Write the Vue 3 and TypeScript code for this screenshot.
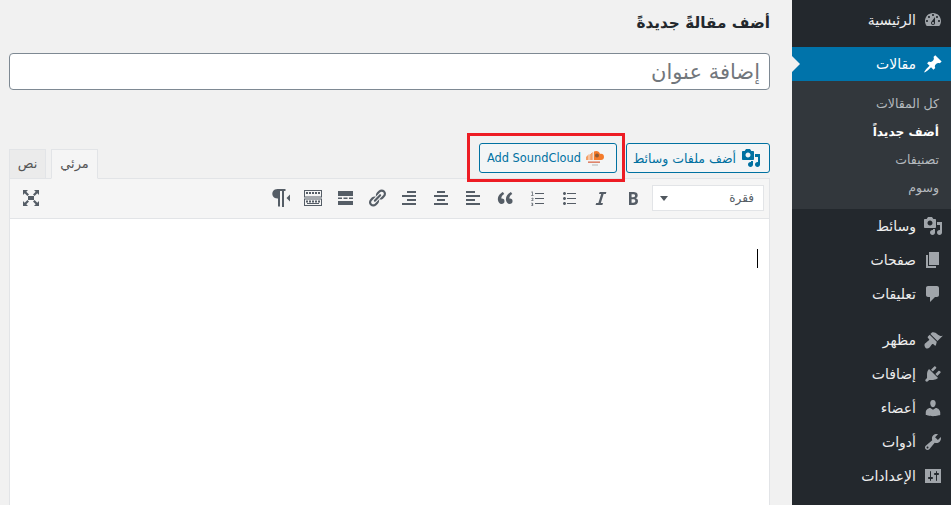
<script setup lang="ts">
const P = {
  home: 'M3.76 16h12.48c1.1-1.37 1.76-3.11 1.76-5 0-4.42-3.58-8-8-8s-8 3.58-8 8c0 1.89.66 3.63 1.76 5zM10 4c.55 0 1 .45 1 1s-.45 1-1 1-1-.45-1-1 .45-1 1-1zM6 6c.55 0 1 .45 1 1s-.45 1-1 1-1-.45-1-1 .45-1 1-1zm8 0c.55 0 1 .45 1 1s-.45 1-1 1-1-.45-1-1 .45-1 1-1zm-5.37 5.55L12 7v6c0 1.1-.9 2-2 2s-2-.9-2-2c0-.57.24-1.08.63-1.45zM4 10c.55 0 1 .45 1 1s-.45 1-1 1-1-.45-1-1 .45-1 1-1zm12 0c.55 0 1 .45 1 1s-.45 1-1 1-1-.45-1-1 .45-1 1-1zm-5 3c0-.55-.45-1-1-1s-1 .45-1 1 .45 1 1 1 1-.45 1-1z',
  pin: 'M10.44 3.02l1.82-1.82 6.36 6.35-1.83 1.82c-1.05-.68-2.48-.57-3.41.36l-.75.75c-.92.93-1.04 2.35-.35 3.41l-1.83 1.82-2.41-2.41-2.8 2.79c-.42.42-3.38 2.71-3.8 2.29s1.86-3.39 2.28-3.81l2.79-2.79L4.1 9.36l1.83-1.82c1.05.69 2.48.57 3.4-.36l.75-.75c.93-.92 1.05-2.35.36-3.41z',
  media: 'M13 11V4c0-.55-.45-1-1-1h-1.67L9 1H5L3.67 3H2c-.55 0-1 .45-1 1v7c0 .55.45 1 1 1h10c.55 0 1-.45 1-1zM7 4.5c1.38 0 2.5 1.12 2.5 2.5S8.38 9.5 7 9.5 4.5 8.38 4.5 7 5.62 4.5 7 4.5zM14 6h5v10.5c0 1.38-1.12 2.5-2.5 2.5S14 17.88 14 16.5s1.12-2.5 2.5-2.5c.17 0 .34.02.5.05V9h-3V6zm-4 8.05V13h2v3.5c0 1.38-1.12 2.5-2.5 2.5S7 17.88 7 16.5 8.12 14 9.5 14c.17 0 .34.02.5.05z',
  page: 'M6 15V2h10v13H6zm-1 1h8v2H3V5h2v11z',
  comment: 'M5 2h9c1.1 0 2 .9 2 2v7c0 1.1-.9 2-2 2h-2l-5 5v-5H5c-1.1 0-2-.9-2-2V4c0-1.1.9-2 2-2z',
  brush: 'M14.48 11.06L7.41 3.99l1.5-1.5c.5-.56 2.3-.47 3.51.32 1.21.8 1.43 1.28 2.91 2.1 1.18.64 2.45 1.26 4.45.85zm-.71.71L6.7 4.7 4.93 6.47c-.39.39-.39 1.02 0 1.41l1.06 1.06c.39.39.39 1.03 0 1.42-.6.6-1.43 1.11-2.21 1.69-.35.26-.7.53-1.01.84C1.43 13.23 1 15 2 17s3 2 4.5 .5c.31-.31.58-.66.84-1.01.58-.78 1.09-1.61 1.69-2.21.39-.39 1.02-.39 1.41 0l1.06 1.06c.39.39 1.03.39 1.42 0z',
  plug: 'M13.11 4.36L9.87 7.6 8 5.73l3.24-3.24c.35-.34 1.05-.2 1.56.32.52.51.66 1.21.31 1.55zm-8 1.77l.91-1.12 9.01 9.01-1.19.84c-.71.71-2.63 1.16-3.82 1.16H6.14L4.9 17.26c-.59.59-1.54.59-2.12 0-.59-.58-.59-1.53 0-2.12l1.24-1.24v-3.88c0-1.13.4-3.19 1.09-3.89zm7.26 3.97l3.24-3.24c.34-.35 1.04-.21 1.55.31.52.51.66 1.21.31 1.55l-3.24 3.25z',
  user: 'M10 9.25c-2.27 0-2.73-3.44-2.73-3.44C7 4.02 7.82 2 9.97 2c2.16 0 2.98 2.02 2.71 3.81 0 0-.41 3.44-2.68 3.44zm0 2.57L12.72 10c2.39 0 4.52 2.33 4.52 4.53v2.49s-3.65 1.13-7.24 1.13c-3.65 0-7.24-1.13-7.24-1.13v-2.49c0-2.25 1.94-4.48 4.47-4.48z',
  wrench: 'M16.68 9.77c-1.34 1.34-3.3 1.67-4.95.99l-5.41 6.52c-.99.99-2.59.99-3.58 0s-.99-2.59 0-3.57l6.52-5.42c-.68-1.65-.35-3.61.99-4.95 1.28-1.28 3.12-1.62 4.72-1.06l-2.89 2.89 2.82 2.82 2.86-2.87c.53 1.58.18 3.39-1.08 4.65zM3.81 16.21c.4.39 1.04.39 1.43 0 .4-.4.4-1.04 0-1.43-.39-.4-1.03-.4-1.43 0-.39.39-.39 1.03 0 1.43z',
  settings: 'M18 17V3H2v14zM8 11h1c.55 0 1 .45 1 1s-.45 1-1 1H8v1.5c0 .28-.22.5-.5.5s-.5-.22-.5-.5V13H6c-.55 0-1-.45-1-1s.45-1 1-1h1V5.5c0-.28.22-.5.5-.5s.5.22.5.5V11zm5-2h-1c-.55 0-1-.45-1-1s.45-1 1-1h1V5.5c0-.28.22-.5.5-.5s.5.22.5.5V7h1c.55 0 1 .45 1 1s-.45 1-1 1h-1v5.5c0 .28-.22.5-.5.5s-.5-.22-.5-.5V9z',
}
const topMenu = [{ label: 'وسائط', d: P.media }, { label: 'صفحات', d: P.page }, { label: 'تعليقات', d: P.comment }]
const lowMenu = [
  { label: 'مظهر', d: P.brush }, { label: 'إضافات', d: P.plug }, { label: 'أعضاء', d: P.user },
  { label: 'أدوات', d: P.wrench }, { label: 'الإعدادات', d: P.settings },
]
const sub = [
  { label: 'كل المقالات', cur: false }, { label: 'أضف جديداً', cur: true },
  { label: 'تصنيفات', cur: false }, { label: 'وسوم', cur: false },
]
const tools = [
  { name: 'bold', d: 'M6 4v13h4.54c1.37 0 2.46-.33 3.26-1 .8-.66 1.2-1.58 1.2-2.77 0-.84-.17-1.51-.51-2.01s-.9-.85-1.67-1.03v-.09c.57-.1 1.02-.4 1.36-.9.34-.49.51-1.13.51-1.91 0-1.14-.39-1.98-1.17-2.5C12.75 4.26 11.5 4 9.78 4H6zm2.57 5.15V6.26h1.36c.73 0 1.27.11 1.61.32.34.22.51.58.51 1.07 0 .54-.16.92-.47 1.15s-.82.35-1.51.35h-1.5zm0 2.19h1.6c1.44 0 2.16.53 2.16 1.61 0 .6-.17 1.05-.51 1.34-.34.29-.86.43-1.57.43H8.57v-3.38z' },
  { name: 'italic', d: 'M14.78 6h-2.13l-2.8 9h2.12l-.62 2H4.6l.62-2h2.14l2.8-9H8.03l.62-2h6.75z' },
  { name: 'ul', d: 'M5.5 7C4.67 7 4 6.33 4 5.5 4 4.68 4.67 4 5.5 4 6.32 4 7 4.68 7 5.5 7 6.33 6.32 7 5.5 7zM8 5h9v1H8V5zm-2.5 7c-.83 0-1.5-.67-1.5-1.5C4 9.68 4.67 9 5.5 9c.82 0 1.5.68 1.5 1.5 0 .83-.68 1.5-1.5 1.5zM8 10h9v1H8v-1zm-2.5 7c-.83 0-1.5-.67-1.5-1.5 0-.82.67-1.5 1.5-1.5.82 0 1.5.68 1.5 1.5 0 .83-.68 1.5-1.5 1.5zM8 15h9v1H8v-1z' },
  { name: 'ol', d: 'M8 5h9v1H8zM8 10h9v1H8zM8 15h9v1H8zM4.6 3.5h1.1V7h.8v.7H4.2V7H5V4.4l-.7.2zM4.2 12.6c0-.2 1.5-1.2 1.5-1.7 0-.3-.2-.4-.5-.4s-.6.1-.8.3l-.2-.6c.3-.2.7-.4 1.2-.4.7 0 1.1.4 1.1 1 0 .8-1 1.3-1.3 1.7h1.4v.6H4.2zM4.2 17.3c.2.1.5.2.8.2.4 0 .6-.2.6-.4 0-.3-.3-.4-.8-.4v-.6c.4 0 .7-.1.7-.4 0-.2-.2-.3-.5-.3s-.5.1-.7.2l-.2-.5c.3-.2.6-.3 1-.3.7 0 1.1.3 1.1.8 0 .3-.2.6-.5.7.4.1.6.4.6.8 0 .6-.5 1-1.3 1-.4 0-.8-.1-1-.2z' },
  { name: 'quote', d: 'M9.49 13.22c0-.74-.2-1.38-.61-1.9-.62-.78-1.83-.88-2.53-.72-.29-1.65 1.11-3.75 2.92-4.65L7.88 4c-2.73 1.3-5.42 4.28-4.96 8.05C3.21 14.43 4.59 16 6.54 16c.85 0 1.56-.25 2.12-.75s.83-1.18.83-2.03zm8.05 0c0-.74-.2-1.38-.61-1.9-.63-.78-1.83-.88-2.53-.72-.29-1.65 1.11-3.75 2.92-4.65L15.93 4c-2.73 1.3-5.41 4.28-4.96 8.05.29 2.38 1.66 3.95 3.61 3.95.85 0 1.56-.25 2.12-.75s.84-1.18.84-2.03z' },
  { name: 'alignleft', d: 'M12 5V3H3v2h9zm5 4V7H3v2h14zm-5 4v-2H3v2h9zm5 4v-2H3v2h14z' },
  { name: 'aligncenter', d: 'M14 5V3H6v2h8zm3 4V7H3v2h14zm-3 4v-2H6v2h8zm3 4v-2H3v2h14z' },
  { name: 'alignright', d: 'M17 5V3H8v2h9zm0 4V7H3v2h14zm0 4v-2H8v2h9zm0 4v-2H3v2h14z' },
  { name: 'link', d: 'M17.74 2.76c1.68 1.69 1.68 4.41 0 6.1l-1.53 1.52c-1.12 1.12-2.7 1.47-4.14 1.09l2.62-2.61.76-.77.76-.76c.84-.84.84-2.2 0-3.04-.84-.85-2.2-.85-3.04 0l-.77.76-3.38 3.38c-.37-1.44-.02-3.02 1.1-4.14l1.52-1.53c1.69-1.68 4.42-1.68 6.1 0zM8.59 13.43l5.34-5.34c.42-.42.42-1.1 0-1.52-.44-.43-1.13-.39-1.53 0l-5.33 5.34c-.42.42-.42 1.1 0 1.52.44.43 1.13.39 1.52 0zm-.76 2.29l4.14-4.15c.38 1.44.03 3.02-1.09 4.14l-1.52 1.53c-1.69 1.68-4.41 1.68-6.1 0-1.68-1.68-1.68-4.42 0-6.1l1.53-1.52c1.12-1.12 2.7-1.47 4.14-1.1l-4.14 4.15c-.85.84-.85 2.2 0 3.05.84.84 2.2.84 3.04 0z' },
  { name: 'hr', d: 'M3 3h15v5H3zM3 13h15v4H3zM3 9.500h4v1.500H3zM8.500 9.500h4v1.500h-4zM14 9.500h4v1.500h-4z' },
  { name: 'kbd', d: 'M1 2h18v7.500H1zm1 1v5.500h16V3zM3 4h2v2H3zm3 0h2v2H6zm3 0h2v2H9zm3 0h2v2h-2zm3 0h2v2h-2zM1 10.500h18V18H1zm1 1V17h16v-5.500zM3 12.500h2v2H3zm3 0h2v2H6zm3 0h2v2H9zm3 0h2v2h-2zm3 0h2v2h-2zM4 15h12v1H4z', even: true },
  { name: 'para', d: 'M14.500 1H6.500C5.600 1 4.700 1.200 3.900 1.600 3.100 2 2.400 2.600 2 3.300 1.500 4 1.300 4.900 1.300 5.800s.2 1.800.7 2.500c.4.7 1.100 1.300 1.900 1.700.7.300 1.600.500 2.500.500h.6v8h2V3h2v16h2V3h1.500zM15.500 10l3.500-3.500v7z' },
]
</script>

<template>
  <div class="page" dir="rtl">
    <aside class="side">
      <a class="mi home">
        <svg class="ic" viewBox="0 0 20 20"><path :d="P.home" fill-rule="evenodd" /></svg>
        <span>الرئيسية</span>
      </a>
      <a class="mi current">
        <svg class="ic" viewBox="0 0 20 20"><path :d="P.pin" /></svg>
        <span>مقالات</span>
        <i class="arrow"></i>
      </a>
      <div class="submenu">
        <a v-for="s in sub" :key="s.label" :class="['si', { cur: s.cur }]">{{ s.label }}</a>
      </div>
      <a v-for="m in topMenu" :key="m.label" class="mi">
        <svg class="ic" viewBox="0 0 20 20"><path :d="m.d" /></svg>
        <span>{{ m.label }}</span>
      </a>
      <div class="sep"></div>
      <a v-for="m in lowMenu" :key="m.label" class="mi">
        <svg class="ic" viewBox="0 0 20 20"><path :d="m.d" fill-rule="evenodd" /></svg>
        <span>{{ m.label }}</span>
      </a>
    </aside>

    <main class="main">
      <h1 class="title">أضف مقالةً جديدةً</h1>
      <input class="post-title" placeholder="إضافة عنوان" />

      <div class="bar">
        <button class="btn media">
          <svg class="btn-ic" viewBox="0 0 20 20"><path :d="P.media" /></svg>
          <span>أضف ملفات وسائط</span>
        </button>
        <div class="sc-wrap">
          <button class="btn sc">
            <svg class="sc-ic" viewBox="0 0 22 18">
              <path fill="#f47b2a" d="M2 7.500h.7V11H2zM3.300 6.500H4V11h-.7zM4.600 5.500h.7V11h-.7zM5.900 5h.7v6h-.7zM7.200 4h.7v7h-.7zM8.500 3.200h.7V11h-.7zM10 2.500C12.500 1 15.500 2.500 16 5c2.300-.6 4 .8 4 3 0 1.700-1.300 3-3 3h-7z" />
              <circle cx="13" cy="6.500" r="2" fill="#8f5a34" />
              <path fill="#d9694a" d="M4 12.500h12v1.300H4z" />
              <path fill="#b5b5b5" d="M8 15.500h6v1H8z" />
            </svg>
            <span dir="ltr">Add SoundCloud</span>
          </button>
          <div class="red-box"></div>
        </div>
        <div class="tabs">
          <div class="tab active">مرئي</div>
          <div class="tab">نص</div>
        </div>
      </div>

      <div class="editor">
        <div class="toolbar">
          <div class="select"><span>فقرة</span><i class="caret"></i></div>
          <span v-for="t in tools" :key="t.name" class="tool">
            <svg viewBox="0 0 20 20"><path :d="t.d" :fill-rule="t.even ? 'evenodd' : 'nonzero'" /></svg>
          </span>
          <span class="tool full">
            <svg viewBox="0 0 20 20"><path d="M7 8h6v4H7zM2 2h5L5.300 3.700 8 6.400 6.400 8 3.700 5.300 2 7zM18 2v5l-1.700-1.700L13.600 8 12 6.400l2.700-2.700L13 2zM2 18v-5l1.700 1.700L6.400 12 8 13.600l-2.700 2.700L7 18zM18 18h-5l1.700-1.700L12 13.600l1.600-1.600 2.700 2.700L18 13z" /></svg>
          </span>
        </div>
        <div class="content"><i class="cursor"></i></div>
      </div>
    </main>
  </div>
</template>

<style>
html, body { margin: 0; background: #f1f1f1; overflow: hidden; }
</style>

<style scoped>
.page {
  display: flex;
  height: 505px;
  width: 951px;
  overflow: hidden;
  background: #f1f1f1;
  font-family: "DejaVu Sans", "Noto Sans", sans-serif;
  font-size: 13px;
}
.side {
  width: 159px;
  flex: none;
  background: #23282d;
  display: flex;
  flex-direction: column;
}
.mi {
  position: relative;
  height: 34px;
  flex: none;
  display: flex;
  align-items: center;
  color: #eee;
  font-size: 14px;
  padding-right: 8px;
  gap: 7px;
}
.home { margin-top: 3px; margin-bottom: 10px; }
.ic { width: 20px; height: 20px; fill: #a0a5aa; flex: none; }
.current { background: #0073aa; color: #fff; }
.current .ic { fill: #fff; }
.arrow {
  position: absolute;
  left: 0;
  top: 9px;
  border: 8px solid transparent;
  border-left-color: #f1f1f1;
  border-right-width: 0;
}
.submenu {
  background: #32373c;
  height: 128px;
  box-sizing: border-box;
  padding-top: 9px;
  display: flex;
  flex-direction: column;
}
.si {
  height: 28px;
  line-height: 28px;
  padding-right: 12px;
  font-size: 12.500px;
  color: #b4b9be;
}
.si.cur { color: #fff; font-weight: 700; font-size: 12.200px; }
.sep { height: 12px; flex: none; }

.main {
  flex: 1;
  min-width: 0;
  box-sizing: border-box;
  padding: 0 22px 0 9px;
}
.title {
  margin: 0;
  height: 53px;
  box-sizing: border-box;
  padding-top: 11px;
  line-height: 24px;
  font-size: 15.300px;
  font-weight: 700;
  color: #23282d;
}
.post-title {
  display: block;
  width: 100%;
  box-sizing: border-box;
  height: 37px;
  border: 1px solid #7e8993;
  border-radius: 4px;
  background: #fff;
  padding: 0 9px;
  font: 21px "DejaVu Sans", sans-serif;
  outline: none;
}
.post-title::placeholder { color: #72777c; opacity: 1; }
.bar {
  margin-top: 53px;
  height: 35px;
  display: flex;
  align-items: flex-start;
  position: relative;
}
.btn {
  height: 30px;
  box-sizing: border-box;
  display: flex;
  align-items: center;
  border: 1px solid #0071a1;
  border-radius: 3px;
  background: #f3f5f6;
  color: #0071a1;
  font: 12.500px "DejaVu Sans", sans-serif;
  padding: 0;
  white-space: nowrap;
}
.media { width: 144px; padding-right: 8px; gap: 5px; }
.btn-ic { width: 20px; height: 20px; fill: #0071a1; flex: none; }
.sc-wrap { position: relative; margin-right: 9px; }
.sc { width: 138px; padding-right: 10px; gap: 3px; font-size: 11.400px; }
.sc-ic { width: 22px; height: 18px; flex: none; }
.red-box {
  position: absolute;
  left: -12px;
  right: -8px;
  top: -10px;
  bottom: -9px;
  border: 3px solid #ed1c24;
}
.tabs {
  margin-right: auto;
  margin-top: 6px;
  display: flex;
  gap: 5px;
  position: relative;
  z-index: 1;
}
.tab {
  width: 37px;
  height: 30px;
  box-sizing: border-box;
  border: 1px solid #e2e4e7;
  background: #ebebeb;
  color: #555;
  font-size: 13px;
  line-height: 28px;
  text-align: center;
}
.tab.active { width: 47px; background: #f5f5f5; border-bottom-color: #f5f5f5; }
.editor {
  border: 1px solid #e2e4e7;
  border-bottom: 0;
  background: #fff;
  height: 327px;
  box-sizing: border-box;
}
.toolbar {
  height: 40px;
  box-sizing: border-box;
  background: #f5f5f5;
  border-bottom: 1px solid #e2e4e7;
  display: flex;
  align-items: center;
  padding: 0 5px 1px 0;
}
.select {
  width: 112px;
  height: 26px;
  box-sizing: border-box;
  border: 1px solid #e2e4e7;
  background: #fff;
  margin-left: 3px;
  padding: 0 9px 0 7px;
  display: flex;
  align-items: center;
  justify-content: space-between;
  font-size: 12px;
  color: #555d66;
}
.caret {
  border: 4px solid transparent;
  border-top: 5px solid #50575e;
  border-bottom-width: 0;
}
.tool {
  width: 32px;
  height: 30px;
  flex: none;
  display: flex;
  align-items: center;
  justify-content: center;
}
.tool svg { width: 20px; height: 20px; fill: #555d66; }
.full { margin-right: auto; margin-left: 5px; }
.content { height: 286px; box-sizing: border-box; padding: 30px 11px 0; }
.cursor { display: block; width: 1px; height: 19px; background: #000; }
</style>
